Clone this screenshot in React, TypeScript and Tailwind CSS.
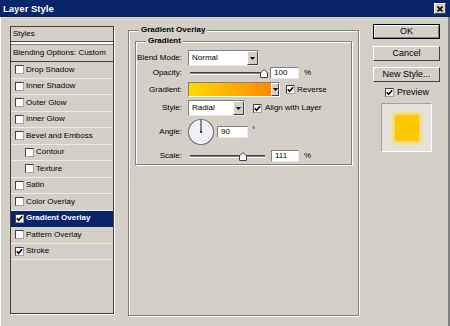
import React from "react";

const CheckBox = ({ checked }: { checked?: boolean }) => (
  <span className="relative w-[9px] h-[9px] shrink-0 bg-white border border-t-[#404040] border-l-[#404040] border-b-[#a0a0a0] border-r-[#a0a0a0]">
    {checked && (
      <svg className="absolute left-0 top-0" width="7" height="7" viewBox="0 0 7 7">
        <path d="M0.8 3.2 L2.6 5.2 L6.2 1.2" stroke="#000" strokeWidth="1.6" fill="none" />
      </svg>
    )}
  </span>
);

const DownArrow = ({ w }: { w: string }) => (
  <div className={`${w} h-full flex items-center justify-center bg-[#d4d0c8] border border-t-white border-l-white border-b-[#404040] border-r-[#404040]`}>
    <svg width="5" height="3" viewBox="0 0 5 3">
      <path d="M0 0 H5 L2.5 3 Z" fill="#000" />
    </svg>
  </div>
);

const Slider = ({ thumb }: { thumb: string }) => (
  <div className="relative w-[75px] h-[11px] ml-[2px]">
    <div className="absolute left-0 right-0 top-[4px] h-[3px] bg-[#808080] border-t border-[#404040] border-b border-b-white" />
    <svg className={`absolute top-[1px] ${thumb}`} width="8" height="9" viewBox="0 0 8 9">
      <path d="M0.5 8.5 V4 L4 0.5 L7.5 4 V8.5 Z" fill="#fff" stroke="#404040" />
    </svg>
  </div>
);

const TextBox = ({ w, value }: { w: string; value: string }) => (
  <div className={`${w} h-[12px] bg-white border border-t-[#808080] border-l-[#808080] border-b-[#e8e8e8] border-r-[#e8e8e8] flex items-center pl-[3px] text-[8px] leading-none`}>
    {value}
  </div>
);

const styleItems: { label: string; checked?: boolean; indent?: boolean; active?: boolean }[] = [
  { label: "Drop Shadow" },
  { label: "Inner Shadow" },
  { label: "Outer Glow" },
  { label: "Inner Glow" },
  { label: "Bevel and Emboss" },
  { label: "Contour", indent: true },
  { label: "Texture", indent: true },
  { label: "Satin" },
  { label: "Color Overlay" },
  { label: "Gradient Overlay", checked: true, active: true },
  { label: "Pattern Overlay" },
  { label: "Stroke", checked: true },
];

const Label = ({ children }: { children: React.ReactNode }) => (
  <div className="w-[47px] text-right pr-[1px] shrink-0">{children}</div>
);

export default function App() {
  return (
    <div className="w-[450px] h-[326px] bg-[#d4d0c8] font-['Liberation_Sans',Arial,sans-serif] text-[8px] text-black overflow-hidden">
      {/* title bar */}
      <div className="h-[17px] bg-[#0a246a] flex items-center justify-between pl-[3px] pr-[4px]">
        <span className="text-white font-bold text-[9.5px] leading-none">Layer Style</span>
        <div className="w-[12px] h-[11px] bg-[#d4d0c8] border border-t-white border-l-white border-b-[#404040] border-r-[#404040] flex items-center justify-center">
          <svg width="6" height="6" viewBox="0 0 6 6">
            <path d="M0.5 0.5 L5.5 5.5 M5.5 0.5 L0.5 5.5" stroke="#000" strokeWidth="1.6" />
          </svg>
        </div>
      </div>

      <div className="flex h-[309px] pl-[9px] border-l border-white border-r-2 border-r-[#808080]">
        {/* styles list */}
        <div className="mt-[9px] w-[104px] h-[288px] border border-[#404040] shadow-[1px_1px_0_#fff] flex flex-col">
          <div className="h-[15px] flex items-center pl-[2px] border-b border-[#404040]">Styles</div>
          <div className="h-[2px] bg-white" />
          <div className="h-[18px] flex items-center pl-[2px] border-t border-[#808080] border-b border-b-[#404040]">
            Blending Options: Custom
          </div>
          {styleItems.map((it) => (
            <div
              key={it.label}
              className={`h-[16.5px] flex items-center gap-[2px] border-b ${
                it.active ? "bg-[#0a246a] text-white font-bold border-[#0a246a]" : "border-[#ecebe7]"
              } ${it.indent ? "pl-[14px]" : "pl-[4px]"}`}
            >
              <CheckBox checked={it.checked} />
              <span className="leading-none">{it.label}</span>
            </div>
          ))}
        </div>

        {/* main group */}
        <fieldset className="ml-[14px] mt-[8px] w-[231px] h-[291px] border border-[#808080] shadow-[inset_1px_1px_0_#fff,1px_1px_0_#fff]">
          <legend className="ml-[10px] px-[2px] font-bold text-[8px] leading-[10px] bg-[#d4d0c8]">Gradient Overlay</legend>
          <fieldset className="mt-[1px] mx-[6px] h-[129px] border border-[#808080] shadow-[inset_1px_1px_0_#fff,1px_1px_0_#fff]">
            <legend className="ml-[10px] px-[2px] font-bold text-[8px] leading-[10px] bg-[#d4d0c8]">Gradient</legend>
            <div className="flex flex-col pt-[4px]">
              <div className="h-[16px] flex items-center">
                <Label>Blend Mode:</Label>
                <div className="ml-[5px] w-[71px] h-[16px] bg-white border border-t-[#808080] border-l-[#808080] border-b-[#e8e8e8] border-r-[#e8e8e8] flex items-center">
                  <span className="flex-1 pl-[3px] leading-none">Normal</span>
                  <DownArrow w="w-[11px]" />
                </div>
              </div>

              <div className="mt-[1px] h-[12px] flex items-center">
                <Label>Opacity:</Label>
                <div className="ml-[5px] flex items-center">
                  <Slider thumb="left-[70px]" />
                  <div className="ml-[5px]">
                    <TextBox w="w-[29px]" value="100" />
                  </div>
                  <span className="ml-[5px]">%</span>
                </div>
              </div>

              <div className="mt-[3px] h-[15px] flex items-center">
                <Label>Gradient:</Label>
                <div className="ml-[5px] w-[92px] h-[15px] flex border border-t-[#808080] border-l-[#808080] border-b-white border-r-white">
                  <div className="flex-1 bg-gradient-to-r from-[#ffd900] to-[#ff8800]" />
                  <DownArrow w="w-[8px]" />
                </div>
                <div className="ml-[6px] flex items-center gap-[2px]">
                  <CheckBox checked />
                  <span>Reverse</span>
                </div>
              </div>

              <div className="mt-[3px] h-[16px] flex items-center">
                <Label>Style:</Label>
                <div className="ml-[5px] w-[57px] h-[16px] bg-white border border-t-[#808080] border-l-[#808080] border-b-[#e8e8e8] border-r-[#e8e8e8] flex items-center">
                  <span className="flex-1 pl-[3px] leading-none">Radial</span>
                  <DownArrow w="w-[11px]" />
                </div>
                <div className="ml-[8px] flex items-center gap-[3px]">
                  <CheckBox checked />
                  <span>Align with Layer</span>
                </div>
              </div>

              <div className="mt-[2px] h-[28px] flex items-center">
                <Label>Angle:</Label>
                <svg className="ml-[4px]" width="28" height="28" viewBox="0 0 28 28">
                  <circle cx="14" cy="14" r="12.5" fill="#eef0f6" stroke="#6c6c74" strokeWidth="1.2" />
                  <circle cx="14" cy="14" r="11.3" fill="none" stroke="#ffffff" strokeWidth="0.8" />
                  <path d="M14 14 V2" stroke="#202020" strokeWidth="1" />
                  <circle cx="14" cy="14" r="1" fill="#000" />
                </svg>
                <div className="ml-[2px]">
                  <TextBox w="w-[31px]" value="90" />
                </div>
                <span className="ml-[4px] -mt-[5px]">°</span>
              </div>

              <div className="mt-[4px] h-[12px] flex items-center">
                <Label>Scale:</Label>
                <div className="ml-[5px] flex items-center">
                  <Slider thumb="left-[49px]" />
                  <div className="ml-[6px]">
                    <TextBox w="w-[28px]" value="111" />
                  </div>
                  <span className="ml-[5px]">%</span>
                </div>
              </div>
            </div>
          </fieldset>
        </fieldset>

        {/* buttons */}
        <div className="ml-[14px] mt-[7px] w-[67px] flex flex-col items-stretch text-[9px]">
          <div className="h-[15px] border border-black">
            <div className="h-full flex items-center justify-center border border-t-white border-l-white border-b-[#808080] border-r-[#808080] leading-none">
              OK
            </div>
          </div>
          <div className="mt-[7px] h-[15px] flex items-center justify-center border border-t-white border-l-white border-b-[#404040] border-r-[#404040] leading-none">
            Cancel
          </div>
          <div className="mt-[6px] h-[15px] flex items-center justify-center border border-t-white border-l-white border-b-[#404040] border-r-[#404040] leading-none">
            New Style...
          </div>
          <div className="mt-[5px] h-[10px] flex items-center pl-[12px] gap-[3px]">
            <CheckBox checked />
            <span className="leading-none">Preview</span>
          </div>
          <div className="mt-[6px] ml-[8px] w-[51px] h-[49px] bg-[#e4e2de] border border-t-[#a0a0a0] border-l-[#a0a0a0] border-b-white border-r-white flex items-center justify-center">
            <div className="w-[24px] h-[26px] bg-[#ffc800] shadow-[0_0_4px_2px_#ffd84a]" />
          </div>
        </div>
      </div>
    </div>
  );
}
